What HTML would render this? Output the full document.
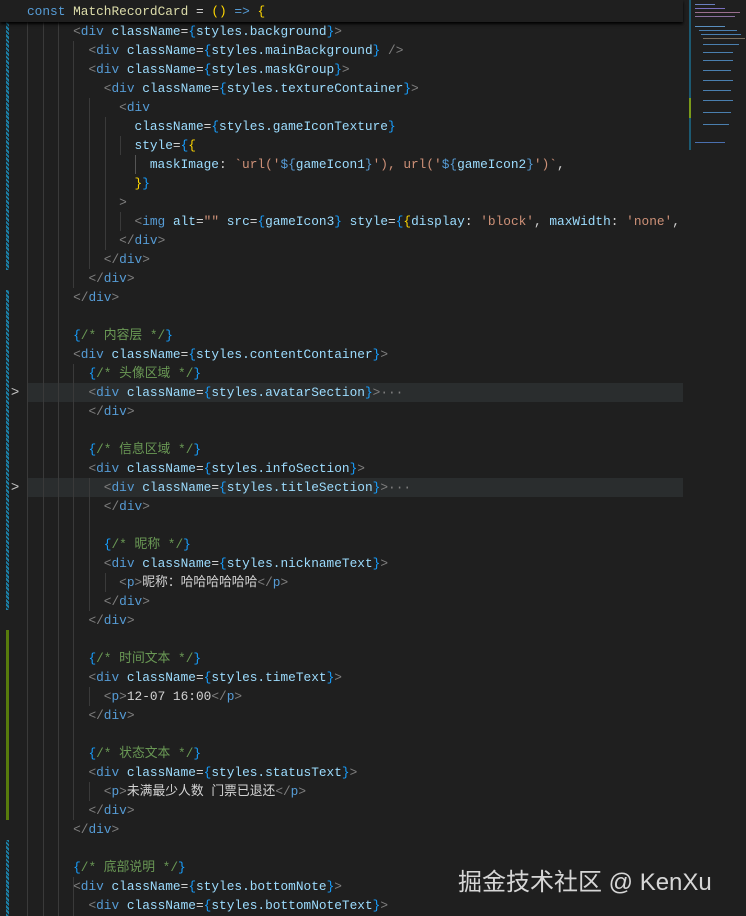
<!DOCTYPE html>
<html><head><meta charset="utf-8"><style>
html,body{margin:0;padding:0;background:#1f1f1f;width:746px;height:916px;overflow:hidden;position:relative}
.code{position:absolute;left:27px;top:22px;font-family:"Liberation Mono","Noto Sans CJK SC",monospace;font-size:12.8px;line-height:19px;color:#d4d4d4}
.l{height:19px;position:relative;white-space:pre}
.p{color:#808080}.t{color:#569cd6}.a{color:#9cdcfe}.b{color:#179fff}.y{color:#ffd700}.m{color:#da70d6}.s{color:#ce9178}.c{color:#6a9955}.w{color:#d4d4d4}.f{color:#dcdcaa}
.hl{position:absolute;left:28px;width:655px;height:19px;background:#2a2d2e}
.g{position:absolute;width:1px;background:#3a3a3a}
.hdr{position:absolute;left:0;top:0;width:683px;height:22px;background:#1f1f1f;box-shadow:0 2px 3px #000;z-index:3}
.hdr .code{top:2px}
.bar{position:absolute;left:6px;width:3px;background:repeating-linear-gradient(45deg,#1b81a8 0 2px,#1f1f1f 2px 3px)}
.chev{position:absolute;left:11px;color:#c5c5c5;font:14px "Liberation Sans",sans-serif}
.wm{position:absolute;left:458px;top:862px;font:24px "Liberation Sans","Noto Sans CJK SC",sans-serif;color:rgba(255,255,255,.82);z-index:5}
.mini{position:absolute;left:683px;top:0;width:63px;height:916px;background:#1f1f1f}
.mini i{position:absolute;height:1px;display:block}
</style></head><body>
<div class="hl" style="top:383px"></div>
<div class="hl" style="top:478px"></div>
<div class="g" style="left:27px;top:22px;height:894px"></div>
<div class="g" style="left:43px;top:22px;height:894px"></div>
<div class="g" style="left:58px;top:22px;height:894px"></div>
<div class="g" style="left:73px;top:41px;height:247px"></div>
<div class="g" style="left:73px;top:364px;height:456px"></div>
<div class="g" style="left:73px;top:877px;height:39px"></div>
<div class="g" style="left:89px;top:98px;height:171px"></div>
<div class="g" style="left:89px;top:478px;height:133px"></div>
<div class="g" style="left:89px;top:687px;height:19px"></div>
<div class="g" style="left:89px;top:782px;height:19px"></div>
<div class="g" style="left:105px;top:117px;height:133px"></div>
<div class="g" style="left:105px;top:573px;height:19px"></div>
<div class="g" style="left:120px;top:136px;height:19px"></div>
<div class="g" style="left:120px;top:212px;height:19px"></div>
<div class="g" style="left:135px;top:155px;height:19px;background:#555"></div>
<div class="bar" style="top:22px;height:248px"></div>
<div class="bar" style="top:290px;height:320px"></div>
<div class="bar" style="top:840px;height:76px"></div>
<div style="position:absolute;left:6px;top:630px;width:3px;height:190px;background:#587c0c"></div>
<div class="chev" style="top:383px">&gt;</div>
<div class="chev" style="top:478px">&gt;</div>
<div class="hdr"><div class="code"><div class="l"><span class="t">const</span> <span class="f">MatchRecordCard</span> <span class="w">=</span> <span class="y">()</span> <span class="t">=&gt;</span> <span class="y">{</span></div></div></div>
<div class="code">
<div class="l">      <span class="p">&lt;</span><span class="t">div</span> <span class="a">className</span><span class="w">=</span><span class="b">{</span><span class="a">styles.background</span><span class="b">}</span><span class="p">&gt;</span></div>
<div class="l">        <span class="p">&lt;</span><span class="t">div</span> <span class="a">className</span><span class="w">=</span><span class="b">{</span><span class="a">styles.mainBackground</span><span class="b">}</span> <span class="p">/&gt;</span></div>
<div class="l">        <span class="p">&lt;</span><span class="t">div</span> <span class="a">className</span><span class="w">=</span><span class="b">{</span><span class="a">styles.maskGroup</span><span class="b">}</span><span class="p">&gt;</span></div>
<div class="l">          <span class="p">&lt;</span><span class="t">div</span> <span class="a">className</span><span class="w">=</span><span class="b">{</span><span class="a">styles.textureContainer</span><span class="b">}</span><span class="p">&gt;</span></div>
<div class="l">            <span class="p">&lt;</span><span class="t">div</span></div>
<div class="l">              <span class="a">className</span><span class="w">=</span><span class="b">{</span><span class="a">styles.gameIconTexture</span><span class="b">}</span></div>
<div class="l">              <span class="a">style</span><span class="w">=</span><span class="b">{</span><span class="y">{</span></div>
<div class="l">                <span class="a">maskImage</span><span class="w">: </span><span class="s">`url('</span><span class="t">${</span><span class="a">gameIcon1</span><span class="t">}</span><span class="s">'), url('</span><span class="t">${</span><span class="a">gameIcon2</span><span class="t">}</span><span class="s">')`</span><span class="w">,</span></div>
<div class="l">              <span class="y">}</span><span class="b">}</span></div>
<div class="l">            <span class="p">&gt;</span></div>
<div class="l">              <span class="p">&lt;</span><span class="t">img</span> <span class="a">alt</span><span class="w">=</span><span class="s">""</span> <span class="a">src</span><span class="w">=</span><span class="b">{</span><span class="a">gameIcon3</span><span class="b">}</span> <span class="a">style</span><span class="w">=</span><span class="b">{</span><span class="y">{</span><span class="a">display</span><span class="w">: </span><span class="s">'block'</span><span class="w">, </span><span class="a">maxWidth</span><span class="w">: </span><span class="s">'none'</span><span class="w">,</span></div>
<div class="l">            <span class="p">&lt;/</span><span class="t">div</span><span class="p">&gt;</span></div>
<div class="l">          <span class="p">&lt;/</span><span class="t">div</span><span class="p">&gt;</span></div>
<div class="l">        <span class="p">&lt;/</span><span class="t">div</span><span class="p">&gt;</span></div>
<div class="l">      <span class="p">&lt;/</span><span class="t">div</span><span class="p">&gt;</span></div>
<div class="l"></div>
<div class="l">      <span class="b">{</span><span class="c">/* 内容层 */</span><span class="b">}</span></div>
<div class="l">      <span class="p">&lt;</span><span class="t">div</span> <span class="a">className</span><span class="w">=</span><span class="b">{</span><span class="a">styles.contentContainer</span><span class="b">}</span><span class="p">&gt;</span></div>
<div class="l">        <span class="b">{</span><span class="c">/* 头像区域 */</span><span class="b">}</span></div>
<div class="l">        <span class="p">&lt;</span><span class="t">div</span> <span class="a">className</span><span class="w">=</span><span class="b">{</span><span class="a">styles.avatarSection</span><span class="b">}</span><span class="p">&gt;</span><span class="p">···</span></div>
<div class="l">        <span class="p">&lt;/</span><span class="t">div</span><span class="p">&gt;</span></div>
<div class="l"></div>
<div class="l">        <span class="b">{</span><span class="c">/* 信息区域 */</span><span class="b">}</span></div>
<div class="l">        <span class="p">&lt;</span><span class="t">div</span> <span class="a">className</span><span class="w">=</span><span class="b">{</span><span class="a">styles.infoSection</span><span class="b">}</span><span class="p">&gt;</span></div>
<div class="l">          <span class="p">&lt;</span><span class="t">div</span> <span class="a">className</span><span class="w">=</span><span class="b">{</span><span class="a">styles.titleSection</span><span class="b">}</span><span class="p">&gt;</span><span class="p">···</span></div>
<div class="l">          <span class="p">&lt;/</span><span class="t">div</span><span class="p">&gt;</span></div>
<div class="l"></div>
<div class="l">          <span class="b">{</span><span class="c">/* 昵称 */</span><span class="b">}</span></div>
<div class="l">          <span class="p">&lt;</span><span class="t">div</span> <span class="a">className</span><span class="w">=</span><span class="b">{</span><span class="a">styles.nicknameText</span><span class="b">}</span><span class="p">&gt;</span></div>
<div class="l">            <span class="p">&lt;</span><span class="t">p</span><span class="p">&gt;</span><span class="w">昵称：哈哈哈哈哈哈</span><span class="p">&lt;/</span><span class="t">p</span><span class="p">&gt;</span></div>
<div class="l">          <span class="p">&lt;/</span><span class="t">div</span><span class="p">&gt;</span></div>
<div class="l">        <span class="p">&lt;/</span><span class="t">div</span><span class="p">&gt;</span></div>
<div class="l"></div>
<div class="l">        <span class="b">{</span><span class="c">/* 时间文本 */</span><span class="b">}</span></div>
<div class="l">        <span class="p">&lt;</span><span class="t">div</span> <span class="a">className</span><span class="w">=</span><span class="b">{</span><span class="a">styles.timeText</span><span class="b">}</span><span class="p">&gt;</span></div>
<div class="l">          <span class="p">&lt;</span><span class="t">p</span><span class="p">&gt;</span><span class="w">12-07 16:00</span><span class="p">&lt;/</span><span class="t">p</span><span class="p">&gt;</span></div>
<div class="l">        <span class="p">&lt;/</span><span class="t">div</span><span class="p">&gt;</span></div>
<div class="l"></div>
<div class="l">        <span class="b">{</span><span class="c">/* 状态文本 */</span><span class="b">}</span></div>
<div class="l">        <span class="p">&lt;</span><span class="t">div</span> <span class="a">className</span><span class="w">=</span><span class="b">{</span><span class="a">styles.statusText</span><span class="b">}</span><span class="p">&gt;</span></div>
<div class="l">          <span class="p">&lt;</span><span class="t">p</span><span class="p">&gt;</span><span class="w">未满最少人数 门票已退还</span><span class="p">&lt;/</span><span class="t">p</span><span class="p">&gt;</span></div>
<div class="l">        <span class="p">&lt;/</span><span class="t">div</span><span class="p">&gt;</span></div>
<div class="l">      <span class="p">&lt;/</span><span class="t">div</span><span class="p">&gt;</span></div>
<div class="l"></div>
<div class="l">      <span class="b">{</span><span class="c">/* 底部说明 */</span><span class="b">}</span></div>
<div class="l">      <span class="p">&lt;</span><span class="t">div</span> <span class="a">className</span><span class="w">=</span><span class="b">{</span><span class="a">styles.bottomNote</span><span class="b">}</span><span class="p">&gt;</span></div>
<div class="l">        <span class="p">&lt;</span><span class="t">div</span> <span class="a">className</span><span class="w">=</span><span class="b">{</span><span class="a">styles.bottomNoteText</span><span class="b">}</span><span class="p">&gt;</span></div>
</div>
<div class="mini">
<div style="position:absolute;left:6px;top:0;width:2px;height:150px;background:#1b81a8;opacity:.6"></div>
<div style="position:absolute;left:6px;top:98px;width:2px;height:20px;background:#7a9a1a"></div>
<i style="left:12px;top:4px;width:20px;background:#6a7fbf"></i>
<i style="left:12px;top:8px;width:30px;background:#7a6fbf"></i>
<i style="left:12px;top:12px;width:45px;background:#9a6f8f"></i>
<i style="left:12px;top:16px;width:40px;background:#8a6f9f"></i>
<i style="left:12px;top:26px;width:30px;background:#5a8fbf"></i>
<i style="left:16px;top:30px;width:38px;background:#4a7faf"></i>
<i style="left:18px;top:34px;width:40px;background:#4a7faf"></i>
<i style="left:20px;top:38px;width:42px;background:#7a6f5f"></i>
<i style="left:20px;top:44px;width:36px;background:#4a7faf"></i>
<i style="left:20px;top:52px;width:30px;background:#4a7faf"></i>
<i style="left:20px;top:60px;width:30px;background:#4a7faf"></i>
<i style="left:20px;top:70px;width:28px;background:#4a7faf"></i>
<i style="left:20px;top:80px;width:30px;background:#4a7faf"></i>
<i style="left:20px;top:90px;width:28px;background:#4a7faf"></i>
<i style="left:20px;top:100px;width:30px;background:#4a7faf"></i>
<i style="left:20px;top:112px;width:28px;background:#4a7faf"></i>
<i style="left:20px;top:124px;width:26px;background:#4a7faf"></i>
<i style="left:12px;top:142px;width:30px;background:#4a6faf"></i>
</div>
<div class="wm">掘金技术社区 @ KenXu</div>
</body></html>
